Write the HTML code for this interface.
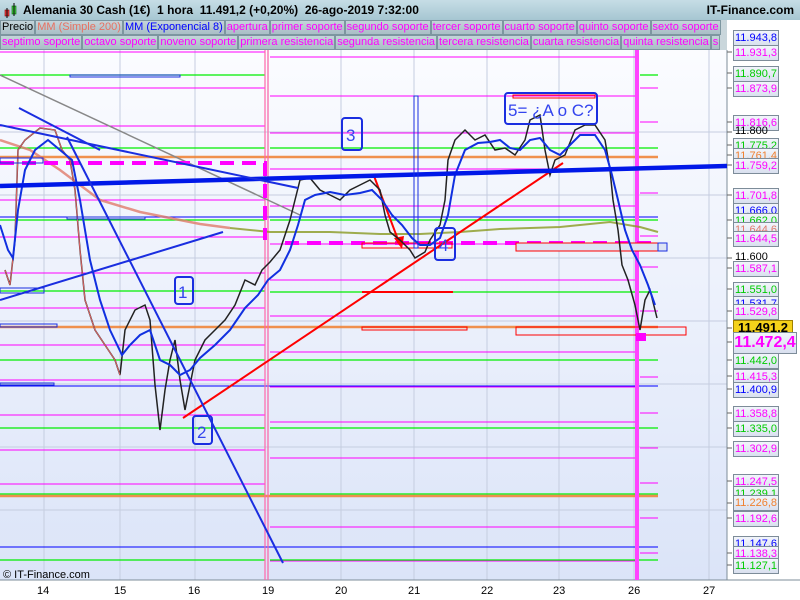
<!DOCTYPE html>
<html><head><meta charset="utf-8"><style>
body{margin:0;width:800px;height:600px;overflow:hidden;background:#fff;font-family:"Liberation Sans",sans-serif;position:relative}
.hdr{position:absolute;left:0;top:0;width:800px;height:20px;background:linear-gradient(#c6dde6,#a6c6d2);}
.hdr b{position:absolute;top:3px;font-size:12px;color:#000;white-space:nowrap}
.row{position:absolute;left:0;height:15px;display:flex}
.chip{height:13px;border:1px solid #7d96a0;background:linear-gradient(#c4d4da,#a9bec6);font-size:11px;line-height:13px;padding:0 1px;color:#f0f;white-space:nowrap;margin-right:0}
.lb{position:absolute;left:733px;width:44px;height:14px;border:1px solid #7d8c99;background:linear-gradient(#f2f5fb,#d9e0ef);font-size:11px;line-height:14px;text-align:center}
.ax{position:absolute;top:585px;font-size:11px;color:#000}
</style></head><body>
<div class="hdr">
<svg style="position:absolute;left:3px;top:2px" width="16" height="16"><rect x="2" y="8" width="4" height="6" fill="#e44" stroke="#800" stroke-width=".6"/><line x1="4" y1="6" x2="4" y2="16" stroke="#000"/><rect x="9" y="4" width="4" height="8" fill="#4c4" stroke="#060" stroke-width=".6"/><line x1="11" y1="1" x2="11" y2="14" stroke="#000"/></svg>
<b style="left:23px">Alemania 30 Cash (1€)&nbsp; 1 hora&nbsp; 11.491,2 (+0,20%)&nbsp; 26-ago-2019 7:32:00</b>
<b style="right:6px">IT-Finance.com</b>
</div>
<div class="row" style="top:20px;background:#c9d6db;width:727px">
<span class="chip" style="color:#000">Precio</span><span class="chip" style="color:#e87060">MM (Simple 200)</span><span class="chip" style="color:#00f">MM (Exponencial 8)</span><span class="chip">apertura</span><span class="chip">primer soporte</span><span class="chip">segundo soporte</span><span class="chip">tercer soporte</span><span class="chip">cuarto soporte</span><span class="chip">quinto soporte</span><span class="chip">sexto soporte</span></div>
<div class="row" style="top:35px;background:#c9d6db;width:727px;overflow:hidden">
<span class="chip">septimo soporte</span><span class="chip">octavo soporte</span><span class="chip">noveno soporte</span><span class="chip">primera resistencia</span><span class="chip">segunda resistencia</span><span class="chip">tercera resistencia</span><span class="chip">cuarta resistencia</span><span class="chip">quinta resistencia</span><span class="chip">s</span></div>
<svg style="position:absolute;left:0;top:50px" width="800" height="550" viewBox="0 50 800 550">
<defs><linearGradient id="bg" x1="0" y1="0" x2="0" y2="1"><stop offset="0" stop-color="#fbfcff"/><stop offset="1" stop-color="#dbe4f8"/></linearGradient></defs>
<rect x="0" y="50" width="727" height="530" fill="url(#bg)"/>
<g stroke="#c5cde0" stroke-width="1">
<line x1="44" y1="50" x2="44" y2="580"/><line x1="120" y1="50" x2="120" y2="580"/><line x1="195" y1="50" x2="195" y2="580"/><line x1="268" y1="50" x2="268" y2="580"/><line x1="341" y1="50" x2="341" y2="580"/><line x1="414" y1="50" x2="414" y2="580"/><line x1="487" y1="50" x2="487" y2="580"/><line x1="559" y1="50" x2="559" y2="580"/><line x1="634" y1="50" x2="634" y2="580"/><line x1="709" y1="50" x2="709" y2="580"/>
<line x1="0" y1="132" x2="727" y2="132"/><line x1="0" y1="258" x2="727" y2="258"/><line x1="0" y1="384" x2="727" y2="384"/><line x1="0" y1="510" x2="727" y2="510"/><line x1="0" y1="195" x2="727" y2="195"/><line x1="0" y1="321" x2="727" y2="321"/><line x1="0" y1="447" x2="727" y2="447"/>
</g>
<line x1="727" y1="50" x2="727" y2="580" stroke="#7d8c99"/>
<line x1="0" y1="580" x2="800" y2="580" stroke="#7d8c99"/>
<g stroke="#f0f" stroke-width="1">
<path d="M0 52H265M0 88H265M0 126H265M0 200H265M0 237H265M0 273H265M0 308H265M0 345H265M0 380H265M0 415H265M0 450H265M0 484H265"/>
<path d="M270 57H636M270 96H636M270 133H636M270 169H636M270 206H636M270 244H636M270 280H636M270 316H636M270 352H636M270 387H636M270 422H636M270 458H636M270 494H636M270 527H636M270 561H636"/>
<path d="M640 38H690M640 75H658M640 88H658M640 122H658M640 193H658M640 236H658M640 267H658M640 311H658M640 377H658M640 413H658M640 448H658M640 483H658M640 518H658M640 553H658"/>
</g>
<g stroke="#0e0" stroke-width="1.3">
<path d="M0 75H265M0 148H265M0 220H265M0 291H265M0 360H265M0 428H265M0 494H265M0 560H265"/>
<path d="M270 148H658M270 220H658M270 292H658M270 360H658M270 428H658M270 494H658M270 560H658M640 75H658"/>
</g>
<g stroke="#00f" stroke-width="1"><path d="M0 217H658M0 386H658M0 547H658"/></g>
<g stroke="#f08030" stroke-width="2.5" opacity=".85"><path d="M0 157H658M0 327H658M0 496H658"/></g>
<path d="M265 50V580M268 50V580" stroke="#f6a" stroke-width="1.5" opacity=".8"/>
<rect x="635" y="50" width="4" height="530" fill="#f4f"/>
<path d="M0 140L30 150L60 170L100 200L140 212L170 218L200 224L230 228" fill="none" stroke="#e07a6a" stroke-width="2.5" opacity=".8"/>
<path d="M230 228L270 232L330 232L380 234L420 234L460 232L500 229L560 227L610 222L640 227L658 232" fill="none" stroke="#8a9a20" stroke-width="2" opacity=".8"/>
<line x1="0" y1="75" x2="300" y2="215" stroke="#888" stroke-width="1.5"/>
<path d="M0 163H265V240" fill="none" stroke="#f0f" stroke-width="4" stroke-dasharray="14,8"/>
<path d="M285 243H658" fill="none" stroke="#f0f" stroke-width="4" stroke-dasharray="14,8"/>
<g fill="none" stroke="#f00" stroke-width="1">
<rect x="362" y="243" width="90" height="5"/><rect x="362" y="327" width="105" height="3"/>
<rect x="516" y="243" width="151" height="8" fill="#dde4f4"/><rect x="516" y="327" width="170" height="8"/><rect x="513" y="95" width="82" height="3"/>
</g>
<line x1="362" y1="292" x2="453" y2="292" stroke="#f00" stroke-width="2"/>
<line x1="183" y1="418" x2="563" y2="163" stroke="#f00" stroke-width="2"/>
<line x1="374" y1="176" x2="400" y2="245" stroke="#f00" stroke-width="2"/><path d="M394 238L402 249L404 236Z" fill="#f00"/>
<polyline fill="none" stroke="#222" stroke-width="1.5" points="5,270 10,285 15,240 18,150 25,140 40,128 55,130 62,150 70,160 75,190 80,250 85,300 95,330 105,345 115,360 120,375 125,330 135,310 145,305 150,320 155,385 160,430 165,390 170,360 175,340 180,380 185,410 190,385 195,360 205,340 215,330 225,320 235,305 245,280 255,285 262,270 270,262 280,250 290,220 295,200 300,180 310,178 320,190 330,195 340,200 350,190 360,185 370,180 380,190 385,215 390,232 400,240 410,250 415,258 425,252 430,240 440,225 445,200 448,160 455,140 465,130 475,140 485,135 495,150 505,148 515,155 525,140 530,120 540,115 545,150 550,175 555,160 565,155 575,130 585,125 595,125 605,140 610,170 613,200 618,230 622,265 628,280 635,305 640,330 645,300 650,290 657,318"/>
<polyline fill="none" stroke="#d66" stroke-width="1" points="5,270 10,285 15,240 18,150 25,140 40,128 55,130 62,150 70,160 75,190 80,250 85,300 95,330 105,345 115,360 120,375"/>
<polyline fill="none" stroke="#1030e0" stroke-width="2" points="0,225 8,250 13,258 18,210 25,170 35,150 48,140 60,150 72,160 80,200 90,260 100,300 110,330 122,355 130,345 140,335 150,330 160,360 170,365 180,375 190,370 200,358 215,345 230,330 245,308 258,295 268,280 280,270 290,250 298,225 305,200 315,195 330,192 345,195 360,193 372,190 382,200 392,215 402,225 412,238 420,245 430,245 440,238 448,215 455,175 465,150 478,143 490,142 500,140 510,148 520,150 530,140 540,138 550,150 560,155 570,145 580,135 595,135 605,150 612,175 618,200 625,230 632,250 640,265 648,285 655,305"/>
<line x1="0" y1="186" x2="727" y2="166" stroke="#0018e8" stroke-width="4.5"/>
<line x1="19" y1="108" x2="100" y2="150" stroke="#1a2ee0" stroke-width="2"/>
<line x1="0" y1="125" x2="298" y2="188" stroke="#1a2ee0" stroke-width="2"/>
<line x1="0" y1="300" x2="223" y2="232" stroke="#1a2ee0" stroke-width="2"/>
<line x1="67" y1="137" x2="283" y2="563" stroke="#1a2ee0" stroke-width="2"/>
<g fill="none" stroke="#1a2ee0" stroke-width="1">
<rect x="70" y="75" width="110" height="2"/><rect x="0" y="158" width="43" height="5"/><rect x="67" y="217" width="78" height="2"/><rect x="0" y="288" width="44" height="5"/><rect x="0" y="324" width="57" height="3"/><rect x="0" y="383" width="54" height="2"/><rect x="414" y="96" width="4" height="152"/><rect x="658" y="243" width="9" height="8"/>
</g>
<rect x="636" y="333" width="10" height="8" fill="#f0f"/>
<g fill="none" stroke="#1a2ee0" stroke-width="2">
<rect x="175" y="277" width="18" height="27" rx="3"/><rect x="193" y="416" width="19" height="28" rx="3"/><rect x="342" y="118" width="20" height="32" rx="3"/><rect x="435" y="228" width="20" height="32" rx="3"/><rect x="505" y="93" width="92" height="31" rx="3"/>
</g>
<g fill="#3344ee" font-family="Liberation Sans,sans-serif" font-size="17">
<text x="178" y="298">1</text><text x="197" y="438">2</text><text x="346" y="141">3</text><text x="439" y="251">4</text><text x="508" y="116">5= ¿A o C?</text>
</g>
<text x="3" y="578" font-size="11" fill="#000" font-family="Liberation Sans,sans-serif">© IT-Finance.com</text>
<g stroke="#666"><path d="M727 37h5M727 52h5M727 73h5M727 88h5M727 122h5M727 132h5M727 145h5M727 155h5M727 165h5M727 195h5M727 220h5M727 238h5M727 258h5M727 268h5M727 289h5M727 311h5M727 328h5M727 342h5M727 360h5M727 376h5M727 389h5M727 413h5M727 428h5M727 448h5M727 481h5M727 503h5M727 518h5M727 553h5M727 565h5"/></g>
</svg>
<div class="ax" style="left:37px">14</div><div class="ax" style="left:114px">15</div><div class="ax" style="left:188px">16</div><div class="ax" style="left:262px">19</div><div class="ax" style="left:335px">20</div><div class="ax" style="left:408px">21</div><div class="ax" style="left:481px">22</div><div class="ax" style="left:553px">23</div><div class="ax" style="left:628px">26</div><div class="ax" style="left:703px">27</div>
<div class="lb" style="top:30px;color:#00f">11.943,8</div>
<div class="lb" style="top:45px;color:#f0f">11.931,3</div>
<div class="lb" style="top:66px;color:#0c0">11.890,7</div>
<div class="lb" style="top:81px;color:#f0f">11.873,9</div>
<div class="lb" style="top:115px;color:#f0f">11.816,6</div>
<div style="position:absolute;left:735px;top:125px;font-size:11px">11.800</div>
<div class="lb" style="top:138px;color:#0c0">11.775,2</div>
<div class="lb" style="top:148px;color:#f08030">11.761,4</div>
<div class="lb" style="top:158px;color:#f0f">11.759,2</div>
<div class="lb" style="top:188px;color:#f0f">11.701,8</div>
<div class="lb" style="top:203px;color:#00f">11.666,0</div>
<div class="lb" style="top:213px;color:#0c0">11.662,0</div>
<div class="lb" style="top:222px;color:#e07a6a">11.644,6</div>
<div class="lb" style="top:231px;color:#f0f">11.644,5</div>
<div style="position:absolute;left:735px;top:251px;font-size:11px">11.600</div>
<div class="lb" style="top:261px;color:#f0f">11.587,1</div>
<div class="lb" style="top:282px;color:#0c0">11.551,0</div>
<div class="lb" style="top:296px;color:#00f">11.531,7</div>
<div class="lb" style="top:304px;color:#f0f">11.529,8</div>
<div class="lb" style="top:320px;width:58px;background:#f5d21a;font-weight:bold;font-size:13px;border-color:#a08000">11.491,2</div>
<div class="lb" style="top:332px;width:62px;height:20px;line-height:20px;color:#f0f;font-weight:bold;font-size:16px">11.472,4</div>
<div class="lb" style="top:353px;color:#0c0">11.442,0</div>
<div class="lb" style="top:369px;color:#f0f">11.415,3</div>
<div class="lb" style="top:382px;color:#00f">11.400,9</div>
<div class="lb" style="top:406px;color:#f0f">11.358,8</div>
<div class="lb" style="top:421px;color:#0c0">11.335,0</div>
<div class="lb" style="top:441px;color:#f0f">11.302,9</div>
<div class="lb" style="top:474px;color:#f0f">11.247,5</div>
<div class="lb" style="top:486px;color:#0c0">11.239,1</div>
<div class="lb" style="top:495px;color:#f08030">11.226,8</div>
<div class="lb" style="top:511px;color:#f0f">11.192,6</div>
<div class="lb" style="top:536px;color:#00f">11.147,6</div>
<div class="lb" style="top:546px;color:#f0f">11.138,3</div>
<div class="lb" style="top:558px;color:#0c0">11.127,1</div>
</body></html>
